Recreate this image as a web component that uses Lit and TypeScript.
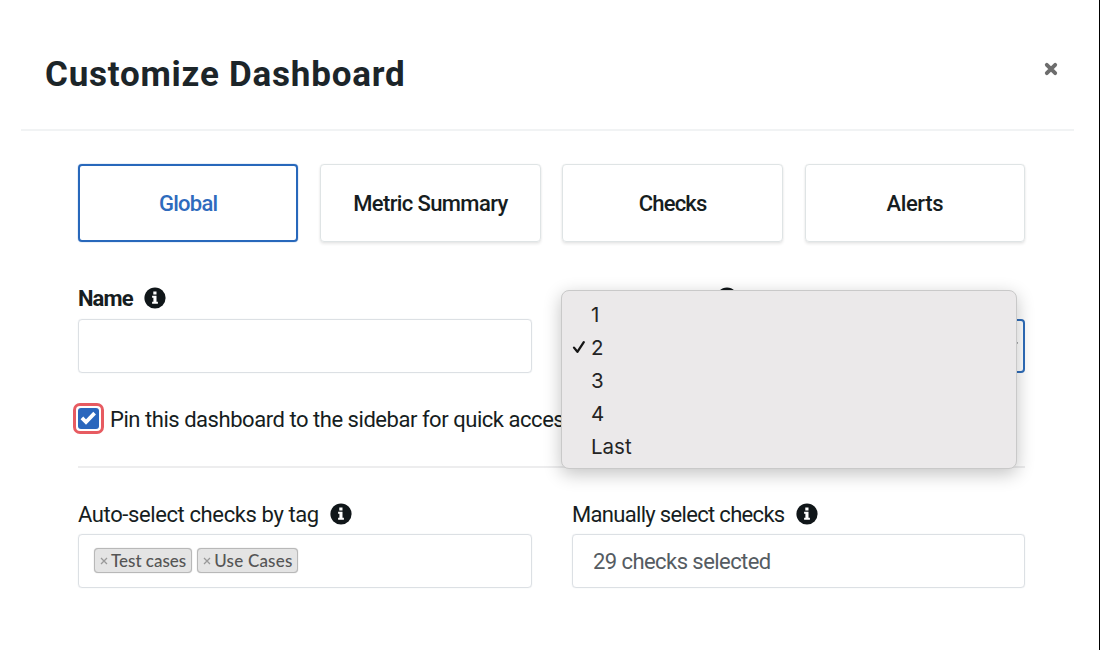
import { LitElement, html, css, svg } from "lit";
import { customElement } from "lit/decorators.js";

const infoIcon = html`<svg class="info" viewBox="0 0 22 22">
  <circle cx="11" cy="11" r="10.6" fill="#101619" />
  ${svg`<path fill="#fff" d="M9.3 4.6h3.2v2.8H9.3zM8.1 8.8h4.4v6h1.4v1.9H8.1v-1.9h1.3v-4.1H8.1z" />`}
</svg>`;

@customElement("app-root")
export class AppRoot extends LitElement {
  static styles = css`
    :host {
      display: block;
      width: 1100px;
      height: 650px;
      overflow: hidden;
      background: #fff;
      color: #161d21;
      font-family: Roboto, "Liberation Sans", sans-serif;
      font-size: 22px;
    }
    * { box-sizing: border-box; }
    .modal { position: relative; height: 650px; border-right: 1px solid #000; }
    header {
      display: flex;
      justify-content: space-between;
      margin: 0 25px 0 21px;
      padding: 54px 16px 0 24px;
      height: 131px;
      border-bottom: 2px solid #f1f3f4;
    }
    h1 {
      margin: 0;
      font: 700 35px/42px Roboto, sans-serif;
      letter-spacing: 0.77px;
      color: #1c2529;
      white-space: nowrap;
    }
    .close { width: 14px; height: 14px; margin-top: 8px; }
    main { margin: 33px 74px 0 78px; width: 947px; }
    .tabs { display: grid; grid-template-columns: repeat(4, 1fr); gap: 21.8px; }
    .tab {
      height: 78px;
      display: flex;
      align-items: center;
      justify-content: center;
      border: 1.5px solid #dfe4e5;
      border-radius: 4px;
      box-shadow: 0 2px 3px rgba(0, 0, 0, 0.09), 0 0 1px rgba(0, 0, 0, 0.12);
      font-weight: 500;
      white-space: nowrap;
    }
    .tab.active { border: 2px solid #2868bb; color: #2f6bbd; box-shadow: 0 0 1px #2868bb; }
    .row { display: grid; grid-template-columns: 454px 453px; justify-content: space-between; }
    .first { margin-top: 41px; }
    .label { display: flex; align-items: center; gap: 11px; height: 30px; white-space: nowrap; }
    .label.bold { font-weight: 700; }
    .label.bold span { padding-top: 1px; }
    .info { width: 22px; height: 22px; display: block; }
    .covered { width: 133px; }
    .field {
      display: flex;
      align-items: center;
      height: 54px;
      margin-top: 5px;
      border: 1.5px solid #dce0e4;
      border-radius: 4px;
      box-shadow: 0 0 1px #d5dade;
    }
    .first .field { margin-top: 6px; }
    .field.select { justify-content: flex-end; border: 2px solid #2f6dba; padding-right: 5px; box-shadow: none; }
    .arrow { width: 14px; height: 8px; margin-bottom: 2px; }
    .pin { display: flex; align-items: center; height: 31px; margin: 30px 0 0 -5px; white-space: nowrap; }
    .t-pin { padding-top: 1px; }
    .box {
      width: 31px;
      height: 31px;
      padding: 2px;
      border: 3px solid #e75b61;
      border-radius: 7px;
      margin-right: 6px;
      flex: none;
    }
    .box svg { display: block; width: 21px; height: 21px; }
    hr { margin: 32px 0 0; border: 0; height: 2px; background: #ededee; }
    .second { margin-top: 31px; }
    .tags { padding: 0 0 1px 15px; gap: 5px; }
    .tag {
      display: flex;
      align-items: center;
      gap: 3px;
      height: 25px;
      padding: 0 5px;
      border: 1px solid #b8b8b8;
      border-radius: 4px;
      box-shadow: 0 0 1px #b0b0b0;
      background: #e4e4e4;
      color: #555;
      font: 500 17px/22px Lato, sans-serif;
      white-space: nowrap;
    }
    .tag svg { width: 8px; height: 8px; }
    .value { padding-left: 20px; color: #555c62; }
    .menu {
      position: absolute;
      left: 561px;
      top: 290px;
      width: 456px;
      height: 179px;
      padding: 6.5px 0 0 9px;
      border: 1px solid #c9c9c9;
      border-radius: 8px;
      background: #ebe9ea;
      box-shadow: 0 5px 18px rgba(0, 0, 0, 0.24);
      font: 20.5px/33.2px Inter, sans-serif;
      color: #242424;
    }
    .option { display: flex; align-items: center; height: 33.2px; }
    .mark { width: 20px; height: 16px; flex: none; }
    .mark svg { display: block; width: 14px; height: 16px; margin-left: 1px; }
    .t-global { letter-spacing: -0.75px; }
    .t-metric { letter-spacing: -0.62px; }
    .t-checks { letter-spacing: -0.8px; }
    .t-alerts { letter-spacing: -0.4px; }
    .t-name { letter-spacing: -0.9px; }
    .t-pin { letter-spacing: -0.46px; }
    .t-auto { letter-spacing: -0.39px; }
    .t-manual { letter-spacing: -0.68px; }
    .t-value { letter-spacing: -0.56px; }
    .t-tag2 { letter-spacing: 0.2px; }
  `;

  private cross() {
    return html`<svg viewBox="0 0 8 8"><path d="M1 1l6 6M7 1l-6 6" stroke="#999" stroke-width="1.3" /></svg>`;
  }

  render() {
    return html`<div class="modal">
      <header>
        <h1>Customize Dashboard</h1>
        <svg class="close" viewBox="0 0 13 13">
          <path d="M2.6 2.6l7.8 7.8M10.4 2.6l-7.8 7.8" stroke="#6d6d6d" stroke-width="3.6" stroke-linecap="round" />
        </svg>
      </header>
      <main>
        <div class="tabs">
          <div class="tab active"><span class="t-global">Global</span></div>
          <div class="tab"><span class="t-metric">Metric Summary</span></div>
          <div class="tab"><span class="t-checks">Checks</span></div>
          <div class="tab"><span class="t-alerts">Alerts</span></div>
        </div>
        <div class="row first">
          <div>
            <div class="label bold"><span class="t-name">Name</span>${infoIcon}</div>
            <div class="field"></div>
          </div>
          <div>
            <div class="label bold"><span class="covered"></span>${infoIcon}</div>
            <div class="field select">
              <svg class="arrow" viewBox="0 0 14 8"><path d="M1 1l6 6 6-6" fill="none" stroke="#343a40" stroke-width="2.5" /></svg>
            </div>
          </div>
        </div>
        <div class="pin">
          <div class="box">
            <svg viewBox="0 0 21 21">
              <rect width="21" height="21" rx="3" fill="#2b67bd" />
              <path d="M3.9 9.9l4.1 4.2 8.6-9" fill="none" stroke="#fff" stroke-width="3.7" />
            </svg>
          </div>
          <span class="t-pin">Pin this dashboard to the sidebar for quick access</span>
        </div>
        <hr />
        <div class="row second">
          <div>
            <div class="label"><span class="t-auto">Auto-select checks by tag</span>${infoIcon}</div>
            <div class="field tags">
              <span class="tag">${this.cross()}<span class="t-tag1">Test cases</span></span>
              <span class="tag">${this.cross()}<span class="t-tag2">Use Cases</span></span>
            </div>
          </div>
          <div>
            <div class="label"><span class="t-manual">Manually select checks</span>${infoIcon}</div>
            <div class="field value"><span class="t-value">29 checks selected</span></div>
          </div>
        </div>
      </main>
      <div class="menu">
        ${["1", "2", "3", "4", "Last"].map(
          (o) => html`<div class="option">
            <span class="mark">${o === "2"
              ? html`<svg viewBox="0 0 14 16"><path d="M2 8.6l3.4 4.2L11.8 3.2" fill="none" stroke="#151515" stroke-width="2.3" stroke-linecap="round" stroke-linejoin="round" /></svg>`
              : ""}</span>
            <span>${o}</span>
          </div>`
        )}
      </div>
    </div>`;
  }
}
